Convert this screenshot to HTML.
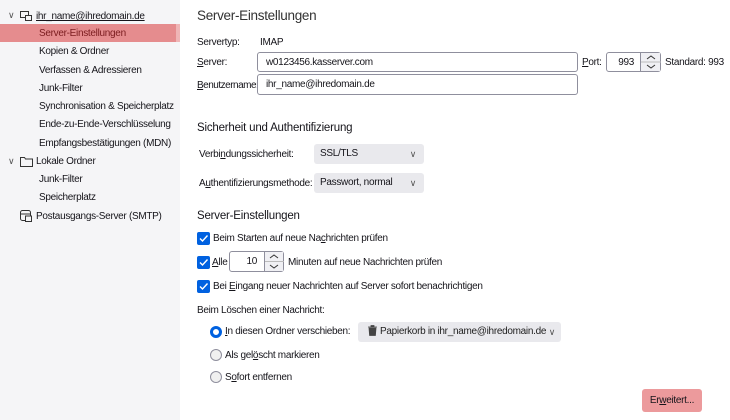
<!DOCTYPE html>
<html><head><meta charset="utf-8"><style>
*{box-sizing:border-box;margin:0;padding:0}
body{width:730px;height:420px;overflow:hidden;background:#fff;font-family:"Liberation Sans",sans-serif;font-size:10px;letter-spacing:-0.3px;color:#15141a;position:relative}
.a{position:absolute;white-space:nowrap}
#side{position:absolute;left:0;top:0;width:180px;height:420px;background:#f5f5f7}
.sel{position:absolute;left:0;top:24px;width:176px;height:18px;background:#e58c8e}
.sel2{position:absolute;left:176px;top:24px;width:4px;height:18px;background:#efb5b6}
.inp{position:absolute;border:1px solid #8f8f9d;border-radius:3px;background:#fff;padding-left:8px;line-height:19px;white-space:nowrap}
.selb{position:absolute;background:#e9e9ed;border-radius:3px;padding-left:6px;line-height:20px;white-space:nowrap}
.chev{position:absolute;right:8px;top:0;font-size:9px;color:#555}
.cb{position:absolute;width:13px;height:13px;background:#0061e0;border-radius:2px}
.cb svg{position:absolute;left:1px;top:1px}
.rd{position:absolute;width:12px;height:12px;border-radius:50%;border:1px solid #8f8f9d;background:#f0f0f0}
.rd.on{border:3.5px solid #0061e0;background:#fff}
u{text-decoration:underline}
.spin{position:absolute;border-left:1px solid #8f8f9d;background:#f0f0f4}
.h{font-size:11.5px;letter-spacing:-0.2px}
</style></head><body>
<div id="side"></div>
<div class="sel"></div><div class="sel2"></div>
<div class="a" style="left:8px;top:10px;font-size:9px;color:#555">&#8744;</div>
<svg class="a" style="left:20px;top:11px" width="12" height="10"><rect x="0.5" y="0.5" width="8" height="6" fill="none" stroke="#333"/><rect x="5.5" y="4.5" width="6" height="5" fill="#f5f5f7" stroke="#333"/></svg>
<div class="a" style="left:36px;top:11px;text-decoration:underline">ihr_name@ihredomain.de</div>
<div class="a" style="left:39px;top:28px;color:#7a1b1e">Server-Einstellungen</div>
<div class="a" style="left:39px;top:46px">Kopien &amp; Ordner</div>
<div class="a" style="left:39px;top:65px">Verfassen &amp; Adressieren</div>
<div class="a" style="left:39px;top:83px">Junk-Filter</div>
<div class="a" style="left:39px;top:101px">Synchronisation &amp; Speicherplatz</div>
<div class="a" style="left:39px;top:119px">Ende-zu-Ende-Verschlüsselung</div>
<div class="a" style="left:39px;top:138px">Empfangsbestätigungen (MDN)</div>
<div class="a" style="left:8px;top:156px;font-size:9px;color:#555">&#8744;</div>
<svg class="a" style="left:20px;top:157px" width="13" height="10"><path d="M0.5 0.5h4l1 1.5h7v7.5h-12z" fill="none" stroke="#333"/></svg>
<div class="a" style="left:36px;top:156px">Lokale Ordner</div>
<div class="a" style="left:39px;top:174px">Junk-Filter</div>
<div class="a" style="left:39px;top:192px">Speicherplatz</div>
<svg class="a" style="left:20px;top:210px" width="12" height="12"><rect x="0.5" y="0.5" width="10" height="10" rx="2" fill="none" stroke="#333"/><line x1="1" y1="4" x2="10" y2="4" stroke="#333"/><rect x="5.5" y="6" width="6" height="5.5" fill="#f5f5f7" stroke="#333"/></svg>
<div class="a" style="left:36px;top:211px">Postausgangs-Server (SMTP)</div>

<div class="a" style="left:197px;top:8px;font-size:13.5px;letter-spacing:-0.3px;color:#333">Server-Einstellungen</div>
<div class="a" style="left:197px;top:37px">Servertyp:</div>
<div class="a" style="left:260px;top:37px">IMAP</div>
<div class="a" style="left:197px;top:57px"><u>S</u>erver:</div>
<div class="inp" style="left:257px;top:52px;width:321px;height:20px">w0123456.kasserver.com</div>
<div class="a" style="left:582px;top:57px"><u>P</u>ort:</div>
<div class="inp" style="left:606px;top:52px;width:55px;height:20px;text-align:right;padding-right:26px">993
<div class="spin" style="right:0;top:0;width:20px;height:18px"><svg width="20" height="18"><path d="M6 6l4-3 4 3M6 12l4 3 4-3" fill="none" stroke="#333"/><line x1="0" y1="9" x2="20" y2="9" stroke="#bbb"/></svg></div></div>
<div class="a" style="left:665px;top:57px">Standard: 993</div>
<div class="a" style="left:197px;top:80px;letter-spacing:-0.5px"><u>B</u>enutzername:</div>
<div class="inp" style="left:257px;top:74px;width:321px;height:21px">ihr_name@ihredomain.de</div>

<div class="a h" style="left:197px;top:122px">Sicherheit und Authentifizierung</div>
<div class="a" style="left:199px;top:149px">Verbi<u>n</u>dungssicherheit:</div>
<div class="selb" style="left:314px;top:144px;width:110px;height:20px">SSL/TLS<span class="chev">&#8744;</span></div>
<div class="a" style="left:199px;top:178px">A<u>u</u>thentifizierungsmethode:</div>
<div class="selb" style="left:314px;top:173px;width:110px;height:20px">Passwort, normal<span class="chev">&#8744;</span></div>

<div class="a h" style="left:197px;top:210px">Server-Einstellungen</div>
<div class="cb" style="left:197px;top:232px"><svg width="11" height="11"><path d="M2 5.5l2.5 2.5 5-5.5" fill="none" stroke="#fff" stroke-width="1.4"/></svg></div>
<div class="a" style="left:213px;top:233px">Beim Starten auf neue Na<u>c</u>hrichten prüfen</div>
<div class="cb" style="left:197px;top:256px"><svg width="11" height="11"><path d="M2 5.5l2.5 2.5 5-5.5" fill="none" stroke="#fff" stroke-width="1.4"/></svg></div>
<div class="a" style="left:212px;top:257px"><u>A</u>lle</div>
<div class="inp" style="left:229px;top:251px;width:55px;height:21px;text-align:right;padding-right:26px;line-height:19px">10
<div class="spin" style="right:0;top:0;width:19px;height:19px"><svg width="19" height="19"><path d="M5 6l4-3 4 3M5 13l4 3 4-3" fill="none" stroke="#333"/><line x1="0" y1="9.5" x2="19" y2="9.5" stroke="#bbb"/></svg></div></div>
<div class="a" style="left:288px;top:257px">Minuten auf neue Nachrichten prüfen</div>
<div class="cb" style="left:197px;top:280px"><svg width="11" height="11"><path d="M2 5.5l2.5 2.5 5-5.5" fill="none" stroke="#fff" stroke-width="1.4"/></svg></div>
<div class="a" style="left:213px;top:281px">Bei <u>E</u>ingang neuer Nachrichten auf Server sofort benachrichtigen</div>
<div class="a" style="left:197px;top:305px">Beim Löschen einer Nachricht:</div>
<div class="rd on" style="left:210px;top:326px"></div>
<div class="a" style="left:225px;top:326px"><u>I</u>n diesen Ordner verschieben:</div>
<div class="selb" style="left:358px;top:322px;width:203px;height:20px;padding-left:10px;color:#222"><svg style="vertical-align:-2px;margin-right:3px" width="9" height="11"><path d="M0 2h9M3 2V0.5h3V2M1 3h7l-0.6 7.5H1.6z" fill="#444" stroke="#444" stroke-width="0.8"/></svg>Papierkorb in ihr_name@ihredomain.de<span class="chev" style="right:6px">&#8744;</span></div>
<div class="rd" style="left:210px;top:349px"></div>
<div class="a" style="left:225px;top:350px">Als gel<u>ö</u>scht markieren</div>
<div class="rd" style="left:210px;top:371px"></div>
<div class="a" style="left:225px;top:372px">S<u>o</u>fort entfernen</div>
<div class="a" style="left:642px;top:389px;width:60px;height:23px;background:#ec9a9c;border-radius:3px;text-align:center;line-height:24px">Er<u>w</u>eitert...</div>
</body></html>
